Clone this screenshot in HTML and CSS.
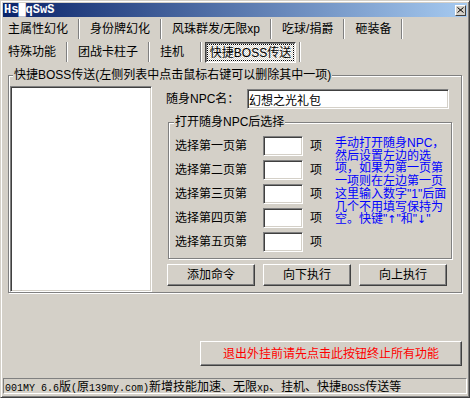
FILE: index.html
```html
<!DOCTYPE html>
<html lang="zh-CN">
<head>
    <meta charset="UTF-8">
    <title>HsMqSwS</title>
    <link rel="stylesheet" href="styles.css">
</head>
<body>
    <div class="window">
        <div class="titlebar">
            <span class="title">Hs█qSwS</span>
            <span class="close-btn">
                <svg width="7" height="6" viewBox="0 0 7 6"><path d="M0.5 0.5l6 5M6.5 0.5l-6 5" stroke="#000" stroke-width="1" fill="none"/></svg>
            </span>
        </div>

        <div class="tab-row row-top">
            <span class="tab first">主属性幻化</span><i class="sep"></i>
            <span class="tab">身份牌幻化</span><i class="sep"></i>
            <span class="tab">风珠群发/无限xp</span><i class="sep"></i>
            <span class="tab">吃球/捐爵</span><i class="sep"></i>
            <span class="tab">砸装备</span><i class="sep"></i>
        </div>
        <div class="tab-row row-bottom">
            <span class="tab first">特殊功能</span><i class="sep"></i>
            <span class="tab">团战卡柱子</span><i class="sep"></i>
            <span class="tab wide">挂机</span><i class="sep"></i>
            <span class="tab active">快捷BOSS传送</span><i class="sep"></i>
        </div>

        <fieldset class="group boss-group">
            <legend>快捷BOSS传送(左侧列表中点击鼠标右键可以删除其中一项)</legend>
            <div class="group-body">
                <div class="listbox"></div>
                <div class="right-col">
                    <div class="npc-row">
                        <label>随身NPC名：</label>
                        <input class="edit npc-name" type="text" value="幻想之光礼包">
                    </div>

                    <fieldset class="group pick-group">
                        <legend>打开随身NPC后选择</legend>
                        <div class="pick-body">
                            <div class="pick-rows">
                                <div class="pick-row"><span class="pick-label">选择第一页第</span><input class="edit num" type="text"><span>项</span></div>
                                <div class="pick-row"><span class="pick-label">选择第二页第</span><input class="edit num" type="text"><span>项</span></div>
                                <div class="pick-row"><span class="pick-label">选择第三页第</span><input class="edit num" type="text"><span>项</span></div>
                                <div class="pick-row"><span class="pick-label">选择第四页第</span><input class="edit num" type="text"><span>项</span></div>
                                <div class="pick-row"><span class="pick-label">选择第五页第</span><input class="edit num" type="text"><span>项</span></div>
                            </div>
                            <div class="hint">手动打开随身NPC，<br>然后设置左边的选<br>项，如果为第一页第<br>一项则在左边第一页<br>这里输入数字"1"后面<br>几个不用填写保持为<br>空。快键"<span class="arrow">↑</span>"和"<span class="arrow">↓</span>"</div>
                        </div>
                    </fieldset>

                    <div class="btn-row">
                        <button class="btn">添加命令</button>
                        <button class="btn">向下执行</button>
                        <button class="btn">向上执行</button>
                    </div>
                </div>
            </div>
        </fieldset>

        <div class="exit-row">
            <button class="btn exit-btn">退出外挂前请先点击此按钮终止所有功能</button>
        </div>

        <div class="statusbar"><span class="en">001MY 6.6</span>版<span class="en">(</span>原<span class="en">139my.com)</span>新增技能加速、无限<span class="en">xp</span>、挂机、快捷<span class="en">BOSS</span>传送等</div>
    </div>
</body>
</html>
```

FILE: styles.css
```css
* {
    box-sizing: border-box;
}
html, body {
    margin: 0;
    padding: 0;
}
body {
    background: #d4d0c8;
    font: 12px/14px "Liberation Sans", "Noto Sans CJK SC", sans-serif;
    color: #000;
}
.window {
    width: 470px;
    height: 398px;
    border: 1px solid;
    border-color: #d4d0c8 #404040 #404040 #d4d0c8;
    box-shadow: inset 1px 1px #fff, inset -1px -1px #808080;
    padding: 2px;
    display: flex;
    flex-direction: column;
    overflow: hidden;
}

/* title bar */
.titlebar {
    height: 14px;
    display: flex;
    align-items: center;
    justify-content: space-between;
    padding: 0 1px;
    background: linear-gradient(to right, #0a246a, #a6caf0);
}
.title {
    font: bold 12px/14px "Liberation Mono", "DejaVu Sans Mono", monospace;
    color: #fff;
}
.close-btn {
    width: 11px;
    height: 11px;
    display: flex;
    align-items: center;
    justify-content: center;
    background: #d4d0c8;
    border: 1px solid;
    border-color: #fff #404040 #404040 #fff;
}

/* tabs (flat buttons) */
.tab-row {
    display: flex;
    align-items: center;
    height: 22px;
}
.row-top {
    margin-top: 1px;
}
.row-bottom {
    height: 23px;
}
.tab {
    padding: 0 10px;
    white-space: nowrap;
}
.tab.first {
    padding-left: 5px;
}
.tab.wide {
    padding-right: 16px;
}
.sep {
    width: 2px;
    height: 20px;
    border-left: 1px solid #808080;
    border-right: 1px solid #fff;
}
.tab.active {
    align-self: flex-end;
    width: 91px;
    height: 21px;
    margin: 0 3px;
    padding: 0;
    display: flex;
    align-items: center;
    justify-content: center;
    border: 1px solid;
    border-color: #404040 #fff #fff #404040;
    box-shadow: inset 1px 1px #808080;
    background: repeating-conic-gradient(#fff 0% 25%, #d4d0c8 0% 50%) 0 0 / 2px 2px;
    outline: 1px dotted #000;
    outline-offset: -3px;
}

/* group boxes */
.group {
    margin: 0;
    padding: 0;
    min-width: 0;
    border: 1px solid #808080;
    box-shadow: 1px 1px #fff, inset 1px 1px #fff;
}
.group legend {
    padding: 0 1px;
    line-height: 14px;
    background: #d4d0c8;
    white-space: nowrap;
}
.boss-group {
    margin: 5px 5px 0;
    height: 225px;
    padding: 4px 0 0 1px;
}
.boss-group legend {
    margin-left: 3px;
}
.group-body {
    display: flex;
}

/* sunken controls */
.listbox, .edit {
    background: #fff;
    border: 1px solid;
    border-color: #808080 #fff #fff #808080;
    box-shadow: inset 1px 1px #404040, inset -1px -1px #d4d0c8;
}
.listbox {
    width: 142px;
    height: 206px;
}
.edit {
    margin: 0;
    padding: 0 1px;
    font: inherit;
    height: 20px;
    outline: none;
}

.right-col {
    width: 286px;
    margin-left: 14px;
    padding-top: 3px;
}
.npc-row {
    display: flex;
    align-items: center;
    height: 20px;
}
.npc-row label {
    width: 81px;
}
.npc-name {
    width: 202px;
}

.pick-group {
    margin: 6px 0 0 2px;
    width: 284px;
    height: 144px;
    padding: 7px 6px 6px;
}
.pick-group legend {
    margin-left: -1px;
}
.pick-body {
    display: flex;
}
.pick-rows {
    display: flex;
    flex-direction: column;
    gap: 4px;
}
.pick-row {
    display: flex;
    align-items: center;
    height: 20px;
}
.pick-label {
    width: 88px;
}
.num {
    width: 40px;
    margin-right: 7px;
}
.hint {
    margin: 1px 0 0 13px;
    color: #0000ff;
    line-height: 12.7px;
    white-space: nowrap;
}
.hint .arrow {
    font-family: "DejaVu Sans", sans-serif;
    font-size: 11px;
}

/* buttons */
.btn {
    margin: 0;
    padding: 0;
    font: inherit;
    color: #000;
    background: #d4d0c8;
    border: 1px solid;
    border-color: #fff #404040 #404040 #fff;
    box-shadow: inset -1px -1px #808080;
}
.btn-row {
    display: flex;
    gap: 8px;
    margin: 5px 0 0 1px;
}
.btn-row .btn {
    width: 88px;
    height: 22px;
}
.exit-row {
    display: flex;
    justify-content: flex-end;
    margin: 48px 5px 0 0;
}
.exit-btn {
    width: 262px;
    height: 25px;
    color: #f00;
}

/* status bar */
.statusbar {
    margin-top: 12px;
    height: 16px;
    padding-left: 1px;
    border: 1px solid;
    border-color: #808080 #fff #fff #808080;
    font-family: "Noto Sans CJK SC", sans-serif;
    line-height: 14px;
    white-space: nowrap;
    overflow: hidden;
}
.en {
    font: 10px "Liberation Mono", monospace;
}
```
